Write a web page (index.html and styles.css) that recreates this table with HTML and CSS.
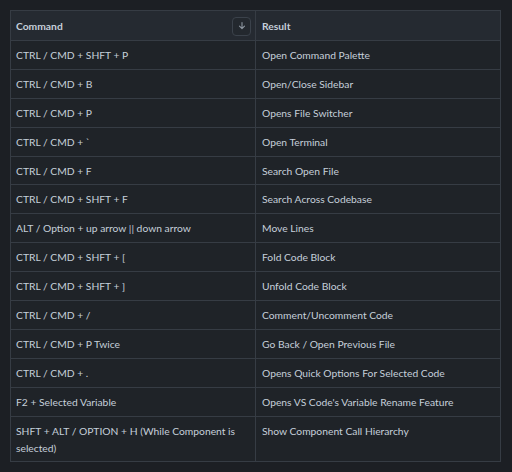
FILE: index.html
```html
<!DOCTYPE html>
<html lang="en">
<head>
    <meta charset="UTF-8">
    <meta name="viewport" content="width=device-width, initial-scale=1.0">
    <title>Shortcuts</title>
    <link rel="stylesheet" href="styles.css">
</head>
<body>
    <table class="shortcuts">
        <thead>
            <tr>
                <th class="col-command">
                    <div class="th-inner">
                        <span>Command</span>
                        <button class="sort-btn" aria-label="Sort">
                            <svg width="10" height="10" viewBox="0 0 10 10"><path d="M5 1.5v6M2.5 5.2L5 7.7l2.5-2.5" fill="none" stroke="currentColor" stroke-width="1.1" stroke-linecap="round" stroke-linejoin="round"/></svg>
                        </button>
                    </div>
                </th>
                <th>Result</th>
            </tr>
        </thead>
        <tbody>
            <tr><td>CTRL / CMD + SHFT + P</td><td>Open Command Palette</td></tr>
            <tr><td>CTRL / CMD + B</td><td>Open/Close Sidebar</td></tr>
            <tr><td>CTRL / CMD + P</td><td>Opens File Switcher</td></tr>
            <tr><td>CTRL / CMD + `</td><td>Open Terminal</td></tr>
            <tr><td>CTRL / CMD + F</td><td>Search Open File</td></tr>
            <tr><td>CTRL / CMD + SHFT + F</td><td>Search Across Codebase</td></tr>
            <tr><td>ALT / Option + up arrow || down arrow</td><td>Move Lines</td></tr>
            <tr><td>CTRL / CMD + SHFT + [</td><td>Fold Code Block</td></tr>
            <tr><td>CTRL / CMD + SHFT + ]</td><td>Unfold Code Block</td></tr>
            <tr><td>CTRL / CMD + /</td><td>Comment/Uncomment Code</td></tr>
            <tr><td>CTRL / CMD + P Twice</td><td>Go Back / Open Previous File</td></tr>
            <tr><td>CTRL / CMD + .</td><td>Opens Quick Options For Selected Code</td></tr>
            <tr><td>F2 + Selected Variable</td><td>Opens VS Code's Variable Rename Feature</td></tr>
            <tr><td>SHFT + ALT / OPTION + H (While Component is selected)</td><td>Show Component Call Hierarchy</td></tr>
        </tbody>
    </table>
</body>
</html>
```

FILE: styles.css
```css
body {
    margin: 0;
    padding: 10px 10px 0 10px;
    background-color: #1c1f24;
    font-family: "Lato", "Open Sans", sans-serif;
    font-size: 10.3px;
    color: #c5cfda;
}
.shortcuts {
    width: 491px;
    border-collapse: collapse;
    background-color: #1f2328;
    table-layout: fixed;
}
.shortcuts th,
.shortcuts td {
    border: 1px solid #363c44;
    text-align: left;
    vertical-align: top;
    line-height: 17px;
    padding: 6px 6px 4.9px 5px;
}
.shortcuts td + td,
.shortcuts th + th {
    padding-left: 6px;
}
.shortcuts th {
    background-color: #252a31;
    font-weight: bold;
    padding-top: 6.5px;
    padding-bottom: 5.5px;
}
.col-command {
    width: 233px;
}
.th-inner {
    display: flex;
    align-items: center;
    justify-content: space-between;
}
.sort-btn {
    width: 19px;
    height: 19px;
    margin: -1px -2px -1px 0;
    padding: 0;
    display: flex;
    align-items: center;
    justify-content: center;
    background: #23282e;
    border: 1px solid #3b424b;
    border-radius: 4px;
    color: #8d96a0;
}
```
